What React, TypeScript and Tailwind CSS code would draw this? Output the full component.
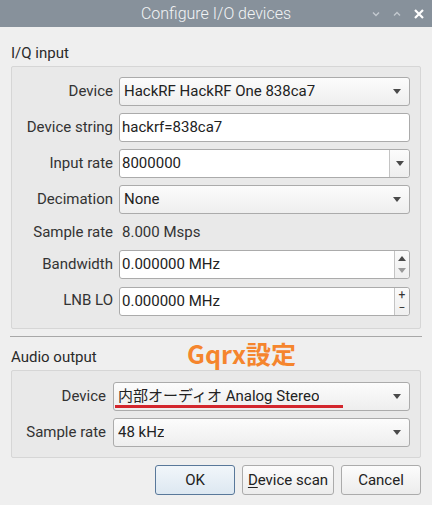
const font = "font-['Roboto','Noto_Sans_CJK_JP',sans-serif]";

const Arrow = ({ dim }: { dim?: boolean }) => (
  <svg width="8" height="5" viewBox="0 0 8 5" className="shrink-0">
    <path d="M0 0 L8 0 L4 5 Z" fill={dim ? "#9a9a9a" : "#4a4a4a"} />
  </svg>
);

const Combo = ({ value }: { value: React.ReactNode }) => (
  <div className="h-[29px] flex items-center justify-between rounded-[3px] border border-[#ababab] bg-gradient-to-b from-[#fcfcfc] to-[#eeeeee] pl-[4px] pr-[8px] text-[15px] text-[#222]">
    <span className="truncate">{value}</span>
    <Arrow />
  </div>
);

const Field = ({ value }: { value: string }) => (
  <div className="h-[29px] flex items-center rounded-[3px] border border-[#ababab] bg-white pl-[2px] text-[15px] text-[#222]">
    {value}
  </div>
);

const EditCombo = ({ value }: { value: string }) => (
  <div className="h-[29px] flex rounded-[3px] border border-[#ababab] bg-white text-[15px] text-[#222]">
    <div className="flex-1 flex items-center pl-[2px]">{value}</div>
    <div className="w-[20px] flex items-center justify-center border-l border-[#c4c4c4] bg-gradient-to-b from-[#fcfcfc] to-[#eeeeee] rounded-r-[3px]">
      <Arrow />
    </div>
  </div>
);

const Spin = ({ value, plus }: { value: string; plus?: boolean }) => (
  <div className="h-[29px] flex rounded-[3px] border border-[#ababab] bg-white text-[15px] text-[#222]">
    <div className="flex-1 flex items-center pl-[2px]">{value}</div>
    <div className="w-[15px] flex flex-col items-center justify-center border-l border-[#c4c4c4] bg-gradient-to-b from-[#fafafa] to-[#efefef] rounded-r-[3px]">
      {plus ? (
        <>
          <span className="h-[13px] leading-[13px] text-[12px] text-[#333]">+</span>
          <span className="h-[13px] leading-[13px] text-[12px] text-[#333]">−</span>
        </>
      ) : (
        <>
          <div className="h-[12px] flex items-center">
            <svg width="8" height="5" viewBox="0 0 8 5">
              <path d="M0 5 L8 5 L4 0 Z" fill="#4a4a4a" />
            </svg>
          </div>
          <div className="h-[12px] flex items-center">
            <Arrow dim />
          </div>
        </>
      )}
    </div>
  </div>
);

const Label = ({ children }: { children: React.ReactNode }) => (
  <div className="text-right text-[15px] text-[#333] leading-[29px]">{children}</div>
);

export default function App() {
  return (
    <div className={`w-[432px] h-[505px] bg-[#efefef] overflow-hidden ${font}`}>
      <div className="relative h-[27px] bg-[#87919b] flex items-center justify-center">
        <span className="text-[16px] font-light text-[#f2f4f6]">Configure I/O devices</span>
        <div className="absolute right-[7px] top-0 h-[27px] flex items-center gap-[11px]">
          <svg width="10" height="10" viewBox="0 0 10 10">
            <path d="M2 3.5 L5 6.5 L8 3.5" stroke="#c3c9cf" strokeWidth="1.4" fill="none" />
          </svg>
          <svg width="10" height="10" viewBox="0 0 10 10">
            <path d="M2 6.5 L5 3.5 L8 6.5" stroke="#c3c9cf" strokeWidth="1.4" fill="none" />
          </svg>
          <svg width="12" height="12" viewBox="0 0 12 12">
            <path d="M2 2 L10 10 M10 2 L2 10" stroke="#ffffff" strokeWidth="2.2" />
          </svg>
        </div>
      </div>

      <div className="px-[11px]">
        <div className="mt-[17px] h-[18px] leading-[18px] text-[15px] text-[#2a2a2a]">I/Q input</div>
        <div className="mt-[4px] border border-[#d6d6d6] bg-[#e9e9e9] rounded-[2px] pt-[10px] pb-[12px] pr-[10px]">
          <div className="grid grid-cols-[101px_1fr] gap-x-[6px] gap-y-[7px]">
            <Label>Device</Label>
            <Combo value="HackRF HackRF One 838ca7" />
            <Label>Device string</Label>
            <Field value="hackrf=838ca7" />
            <Label>Input rate</Label>
            <EditCombo value="8000000" />
            <Label>Decimation</Label>
            <Combo value="None" />
            <div className="text-right text-[15px] text-[#333] leading-[22px]">Sample rate</div>
            <div className="pl-[3px] text-[15px] text-[#333] leading-[22px]">8.000 Msps</div>
            <Label>Bandwidth</Label>
            <Spin value="0.000000 MHz" />
            <Label>LNB LO</Label>
            <div className="pt-[1px]">
              <Spin value="0.000000 MHz" plus />
            </div>
          </div>
        </div>

        <div className="mt-[7px] h-[1px] bg-[#a8a8a8] -mx-[1px]" />

        <div className="relative mt-[11px] h-[18px] leading-[18px] text-[15px] text-[#2a2a2a]">
          Audio output
          <span className="absolute left-[176px] -top-[9px] text-[25px] font-bold text-[#f5852d] leading-[28px] font-['Noto_Sans_CJK_JP',sans-serif]">
            Gqrx設定
          </span>
        </div>
        <div className="mt-[4px] border border-[#d6d6d6] bg-[#e9e9e9] rounded-[2px] pt-[11px] pb-[10px] pr-[10px]">
          <div className="grid grid-cols-[94px_1fr] gap-x-[7px] gap-y-[7px]">
            <Label>Device</Label>
            <div className="relative">
              <Combo value="内部オーディオ Analog Stereo" />
              <div className="absolute left-[2px] top-[23px] w-[228px] h-[3px] bg-[#d3262d]" />
            </div>
            <Label>Sample rate</Label>
            <Combo value="48 kHz" />
          </div>
        </div>

        <div className="mt-[7px] flex justify-end gap-[7px] text-[15px] text-[#222]">
          <div className="w-[80px] h-[30px] flex items-center justify-center rounded-[3px] border border-[#59789a] bg-gradient-to-b from-[#f1f6fa] to-[#dde8f1]">
            OK
          </div>
          <div className="w-[92px] h-[30px] flex items-center justify-center rounded-[3px] border border-[#ababab] bg-gradient-to-b from-[#fcfcfc] to-[#ececec]">
            <span className="underline underline-offset-2">D</span>evice scan
          </div>
          <div className="w-[80px] h-[30px] flex items-center justify-center rounded-[3px] border border-[#ababab] bg-gradient-to-b from-[#fcfcfc] to-[#ececec]">
            Cancel
          </div>
        </div>
      </div>
    </div>
  );
}
